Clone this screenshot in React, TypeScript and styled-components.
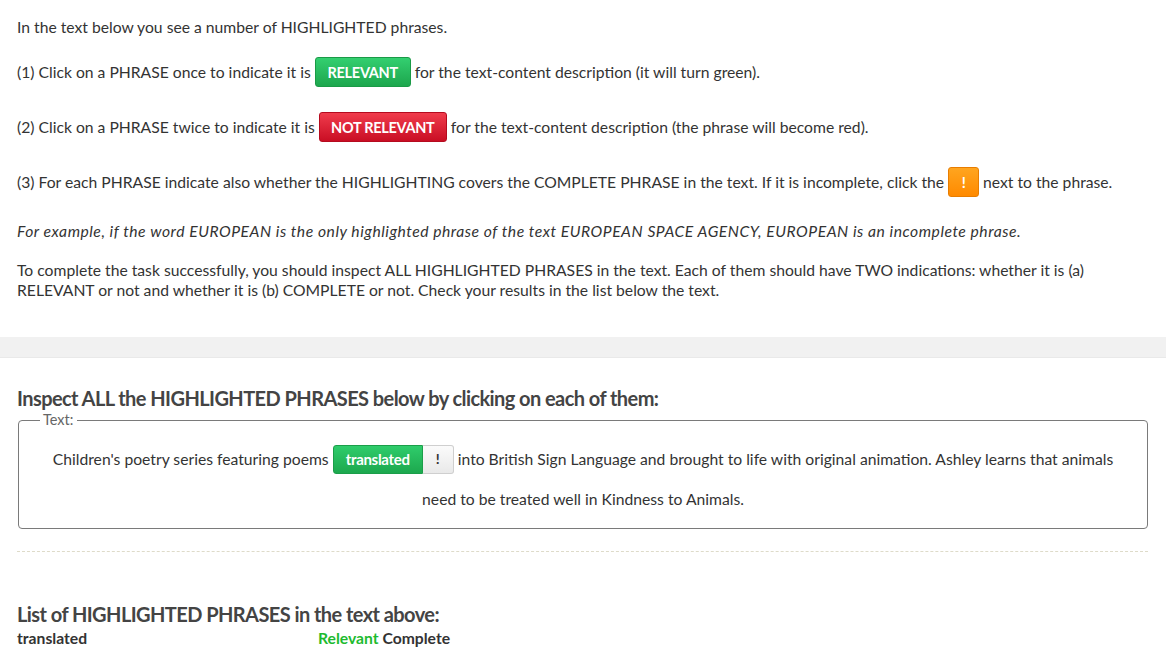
import React from "react";
import styled, { createGlobalStyle } from "styled-components";

const Global = createGlobalStyle`
  html, body { margin: 0; padding: 0; background: #fff; }
  body { font-family: Lato, "Open Sans", Arial, sans-serif; color: #333; font-size: 15.7px; }
`;

const Page = styled.div`
  display: flex;
  flex-direction: column;
`;

const Intro = styled.section`
  padding: 17px 18px 0 17px;
  display: flex;
  flex-direction: column;
`;

const Para = styled.p<{ $top?: number; $italic?: boolean }>`
  margin: ${(p) => p.$top ?? 0}px 0 0;
  line-height: 20px;
  font-style: ${(p) => (p.$italic ? "italic" : "normal")};
  letter-spacing: ${(p) => (p.$italic ? "0.52px" : "normal")};
`;

const ButtonRow = styled.p<{ $top: number }>`
  margin: ${(p) => p.$top}px 0 0;
  display: flex;
  align-items: center;
  height: 30px;
  gap: 4px;
  white-space: pre;
`;

const tones = {
  green: ["#33cf70", "#1da64d", "#1a9a46"],
  red: ["#f03c4c", "#c90e24", "#b50b1f"],
  orange: ["#ffa51f", "#ff8a00", "#e87d00"],
} as const;

const Badge = styled.span<{ $tone: keyof typeof tones; $w: number }>`
  display: inline-flex;
  align-items: center;
  justify-content: center;
  width: ${(p) => p.$w}px;
  height: 30px;
  box-sizing: border-box;
  border-radius: 3px;
  border: 1px solid ${(p) => tones[p.$tone][2]};
  background: linear-gradient(${(p) => tones[p.$tone][0]}, ${(p) => tones[p.$tone][1]});
  color: #fff;
  font-weight: 700;
  font-size: 14.5px;
  letter-spacing: -0.3px;
`;

const Band = styled.div`
  margin-top: 37px;
  height: 20px;
  background: #f1f1f1;
  border-bottom: 1px solid #e9e9e9;
`;

const Main = styled.section`
  padding: 0 18px 0 17px;
  display: flex;
  flex-direction: column;
`;

const Heading = styled.h2<{ $top: number }>`
  margin: ${(p) => p.$top}px 0 0;
  font-size: 20px;
  line-height: 24px;
  font-weight: 700;
  color: #444;
  letter-spacing: -0.57px;
`;

const Fieldset = styled.fieldset`
  margin: 2px 0 0 1px;
  padding: 11px 26px 9px;
  border: 1px solid #7a7a7a;
  border-radius: 4px;
  min-width: 0;
`;

const Legend = styled.legend`
  padding: 0 4px 0 3px;
  margin-left: -5px;
  font-size: 14.5px;
  line-height: 16px;
  color: #666;
`;

const FieldText = styled.div`
  text-align: center;
  line-height: 40px;
`;

const Phrase = styled.span`
  display: inline-flex;
  vertical-align: middle;
  height: 29px;
  margin: -4px 0 0;
`;

const PhraseText = styled.span`
  display: inline-flex;
  align-items: center;
  justify-content: center;
  box-sizing: border-box;
  width: 90px;
  background: linear-gradient(#2fcc6b, #1da84e);
  border: 1px solid #1b9e49;
  border-radius: 3px 0 0 3px;
  color: #fff;
  font-weight: 700;
  font-size: 15px;
  letter-spacing: -0.3px;
`;

const Flag = styled.span`
  display: inline-flex;
  align-items: center;
  justify-content: center;
  width: 31px;
  box-sizing: border-box;
  background: linear-gradient(#fbfbfb, #e9e9e9);
  border: 1px solid #cfcfcf;
  border-left: none;
  border-radius: 0 3px 3px 0;
  color: #333;
  font-weight: 700;
  font-size: 14px;
`;

const Divider = styled.hr`
  margin: 22px 0 0;
  border: none;
  border-top: 1px dashed #dedbc9;
`;

const ListRow = styled.div`
  display: grid;
  grid-template-columns: 301px auto;
  font-weight: 700;
  line-height: 24px;
  color: #333;
`;

const Good = styled.span`
  color: #1dbb2f;
`;

export default function App() {
  return (
    <Page>
      <Global />
      <Intro>
        <Para>In the text below you see a number of HIGHLIGHTED phrases.</Para>
        <ButtonRow $top={20}>
          (1) Click on a PHRASE once to indicate it is
          <Badge $tone="green" $w={96}>RELEVANT</Badge>
          for the text-content description (it will turn green).
        </ButtonRow>
        <ButtonRow $top={25}>
          (2) Click on a PHRASE twice to indicate it is
          <Badge $tone="red" $w={128}>NOT RELEVANT</Badge>
          for the text-content description (the phrase will become red).
        </ButtonRow>
        <ButtonRow $top={25}>
          (3) For each PHRASE indicate also whether the HIGHLIGHTING covers the COMPLETE PHRASE in the text. If it is incomplete, click the
          <Badge $tone="orange" $w={31}>!</Badge>
          next to the phrase.
        </ButtonRow>
        <Para $top={24} $italic>
          For example, if the word EUROPEAN is the only highlighted phrase of the text EUROPEAN SPACE AGENCY, EUROPEAN is an incomplete phrase.
        </Para>
        <Para $top={19}>
          To complete the task successfully, you should inspect ALL HIGHLIGHTED PHRASES in the text. Each of them should have TWO indications: whether it is (a) RELEVANT or not and whether it is (b) COMPLETE or not. Check your results in the list below the text.
        </Para>
      </Intro>
      <Band />
      <Main>
        <Heading $top={28}>Inspect ALL the HIGHLIGHTED PHRASES below by clicking on each of them:</Heading>
        <Fieldset>
          <Legend>Text:</Legend>
          <FieldText>
            Children's poetry series featuring poems{" "}
            <Phrase>
              <PhraseText>translated</PhraseText>
              <Flag>!</Flag>
            </Phrase>{" "}
            into British Sign Language and brought to life with original animation. Ashley learns that animals need to be treated well in Kindness to Animals.
          </FieldText>
        </Fieldset>
        <Divider />
        <Heading $top={50}>List of HIGHLIGHTED PHRASES in the text above:</Heading>
        <ListRow>
          <span>translated</span>
          <span>
            <Good>Relevant</Good> Complete
          </span>
        </ListRow>
      </Main>
    </Page>
  );
}
